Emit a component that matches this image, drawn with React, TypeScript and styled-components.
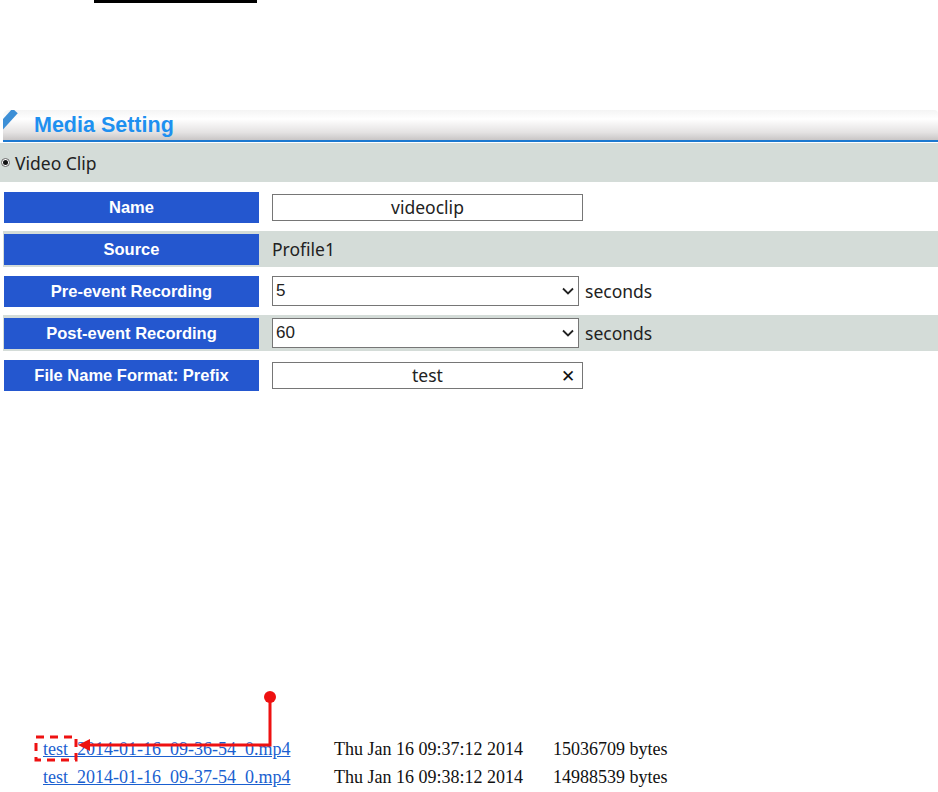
import React from 'react';
import styled, { createGlobalStyle } from 'styled-components';

const GlobalStyle = createGlobalStyle`
    html, body {
        margin: 0;
        padding: 0;
        background: #ffffff;
    }
    body {
        width: 938px;
        height: 792px;
        overflow: hidden;
        position: relative;
        font-family: "Noto Sans", "Liberation Sans", Arial, sans-serif;
    }
`;

const Page = styled.div`
    position: relative;
    width: 938px;
    height: 792px;
`;

const TopRule = styled.div`
    width: 163px;
    height: 3px;
    margin-left: 94px;
    background: #000000;
`;

const Panel = styled.div`
    margin: 107px 0 0 3px;
    width: 935px;
`;

const Header = styled.div`
    position: relative;
    height: 30px;
    display: flex;
    align-items: center;
    padding-left: 31px;
    background: linear-gradient(#f4f4f4 0%, #ffffff 30%, #e4e2e2 75%, #c9c6c6 100%);
    border-bottom: 2px solid #1c79d0;
    border-radius: 6px 4px 0 0;
    overflow: hidden;
`;

const Corner = styled.span`
    position: absolute;
    left: -4px;
    top: 17px;
    width: 28px;
    height: 7px;
    background: #3d8fd6;
    transform: rotate(-48deg);
    transform-origin: 0 100%;
`;

const Title = styled.h1`
    margin: 0;
    font-family: "Liberation Sans", Arial, sans-serif;
    font-size: 21.5px;
    font-weight: bold;
    color: #1e90f0;
`;

const SectionRow = styled.div`
    margin-top: 1px;
    height: 39px;
    display: flex;
    align-items: center;
    background: #d4dcd8;
    margin-left: -3px;
    font-size: 17.5px;
    color: #222222;
`;

const Radio = styled.span`
    width: 9px;
    height: 9px;
    border-radius: 50%;
    border: 1px solid #666666;
    background: #ffffff;
    display: inline-flex;
    align-items: center;
    justify-content: center;
    margin: 0 5px 0 1px;
    box-sizing: border-box;
    &::after {
        content: '';
        width: 5px;
        height: 5px;
        border-radius: 50%;
        background: #111111;
    }
`;

const Rows = styled.div`
    margin-top: 7px;
    display: flex;
    flex-direction: column;
    gap: 6px;
`;

const Row = styled.div<{ $shaded?: boolean }>`
    height: 36px;
    display: flex;
    align-items: center;
    background: ${(p) => (p.$shaded ? '#d4dcd8' : 'transparent')};
`;

const Label = styled.div`
    width: 255px;
    height: 31px;
    margin-left: 1px;
    display: flex;
    align-items: center;
    justify-content: center;
    background: #2457cf;
    color: #ffffff;
    font-family: "Liberation Sans", Arial, sans-serif;
    font-weight: bold;
    font-size: 16.5px;
`;

const Value = styled.div`
    margin-left: 13px;
    display: flex;
    align-items: center;
    font-size: 17.5px;
    color: #222222;
`;

const TextBox = styled.div`
    position: relative;
    box-sizing: border-box;
    width: 311px;
    height: 27px;
    border: 1px solid #767676;
    background: #ffffff;
    display: flex;
    align-items: center;
    justify-content: center;
    font-size: 17.5px;
    color: #222222;
`;

const Clear = styled.span`
    position: absolute;
    right: 7px;
    top: 50%;
    transform: translateY(-50%);
    font-size: 17px;
    line-height: 1;
    color: #111111;
`;

const Select = styled.div`
    box-sizing: border-box;
    width: 307px;
    height: 30px;
    border: 1px solid #767676;
    background: #ffffff;
    display: flex;
    align-items: center;
    justify-content: space-between;
    padding: 0 3px 0 3px;
    font-family: "Liberation Sans", Arial, sans-serif;
    font-size: 17px;
    color: #222222;
`;

const Unit = styled.span`
    margin-left: 6px;
    font-size: 17.5px;
    color: #222222;
`;

const Files = styled.div`
    position: absolute;
    left: 43px;
    top: 737px;
    display: grid;
    grid-template-columns: 291px 219px auto;
    row-gap: 3px;
    font-family: "Liberation Serif", "Times New Roman", serif;
    font-size: 18px;
    line-height: 25px;
    color: #111111;
`;

const FileLink = styled.a`
    color: #1a5fd0;
    text-decoration: underline;
`;

const Annotation = styled.svg`
    position: absolute;
    left: 0;
    top: 0;
    pointer-events: none;
`;

const Chevron = () => (
    <svg width="14" height="14" viewBox="0 0 14 14">
        <path d="M2 4.5 L7 9.5 L12 4.5" fill="none" stroke="#222" strokeWidth="1.8" />
    </svg>
);

const files = [
    { name: 'test_2014-01-16_09-36-54_0.mp4', date: 'Thu Jan 16 09:37:12 2014', size: '15036709 bytes' },
    { name: 'test_2014-01-16_09-37-54_0.mp4', date: 'Thu Jan 16 09:38:12 2014', size: '14988539 bytes' },
];

const App: React.FunctionComponent = () => {
    return (
        <Page>
            <GlobalStyle />
            <TopRule />
            <Panel>
                <Header>
                    <Corner />
                    <Title>Media Setting</Title>
                </Header>
                <SectionRow>
                    <Radio />
                    Video Clip
                </SectionRow>
                <Rows>
                    <Row>
                        <Label>Name</Label>
                        <Value>
                            <TextBox>videoclip</TextBox>
                        </Value>
                    </Row>
                    <Row $shaded>
                        <Label>Source</Label>
                        <Value>Profile1</Value>
                    </Row>
                    <Row>
                        <Label>Pre-event Recording</Label>
                        <Value>
                            <Select>
                                5
                                <Chevron />
                            </Select>
                            <Unit>seconds</Unit>
                        </Value>
                    </Row>
                    <Row $shaded>
                        <Label>Post-event Recording</Label>
                        <Value>
                            <Select>
                                60
                                <Chevron />
                            </Select>
                            <Unit>seconds</Unit>
                        </Value>
                    </Row>
                    <Row>
                        <Label>File Name Format: Prefix</Label>
                        <Value>
                            <TextBox>
                                test
                                <Clear>✕</Clear>
                            </TextBox>
                        </Value>
                    </Row>
                </Rows>
            </Panel>
            <Files>
                {files.map((f) => (
                    <React.Fragment key={f.name}>
                        <FileLink href="#">{f.name}</FileLink>
                        <span>{f.date}</span>
                        <span>{f.size}</span>
                    </React.Fragment>
                ))}
            </Files>
            <Annotation width="938" height="792" viewBox="0 0 938 792">
                <circle cx="270" cy="697" r="6" fill="#ee1111" />
                <polyline points="270,697 270,745 88,745" fill="none" stroke="#ee1111" strokeWidth="3" />
                <polygon points="78,745 90,739 90,751" fill="#ee1111" />
                <rect x="36" y="737" width="40" height="23" fill="none" stroke="#ee1111" strokeWidth="3" strokeDasharray="8 6" />
            </Annotation>
        </Page>
    );
};

export default App;
